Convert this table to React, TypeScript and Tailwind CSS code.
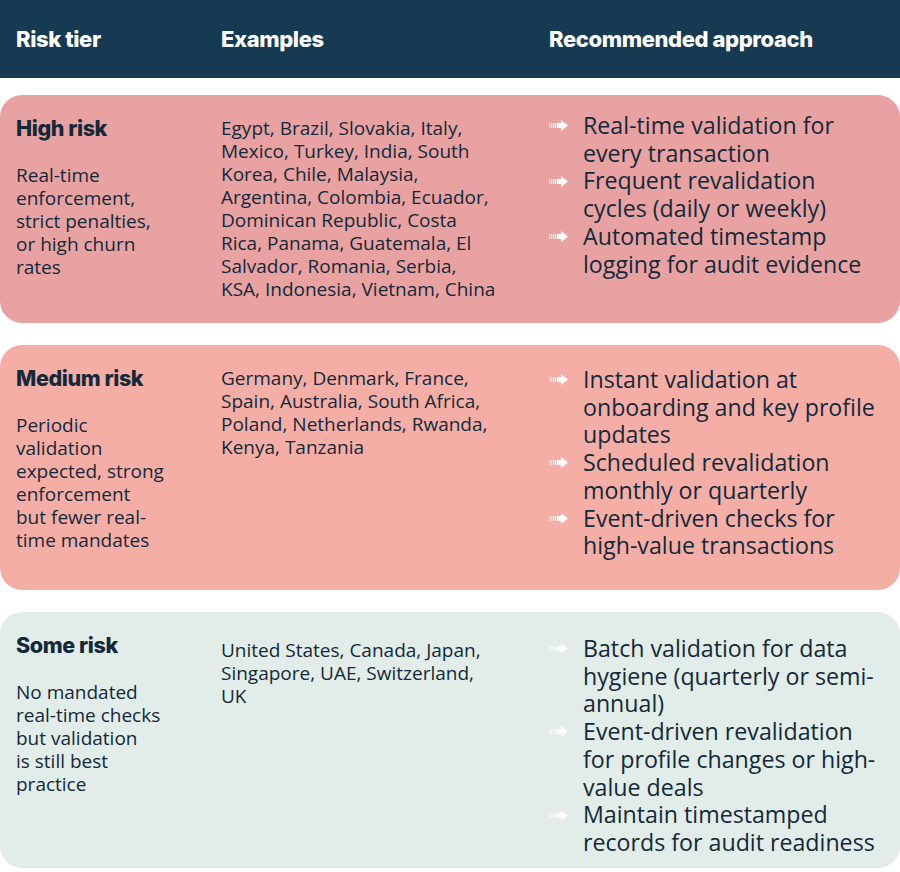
import type { ReactNode } from "react";

type Tier = {
  title: string;
  desc: string[];
  examples: string[];
  approach: string[][];
  bg: string;
  height: string;
  exTop: string;
  apTop: string;
};

const tiers: Tier[] = [
  {
    title: "High risk",
    desc: ["Real-time", "enforcement,", "strict penalties,", "or high churn", "rates"],
    examples: [
      "Egypt, Brazil, Slovakia, Italy,",
      "Mexico, Turkey, India, South",
      "Korea, Chile, Malaysia,",
      "Argentina, Colombia, Ecuador,",
      "Dominican Republic, Costa",
      "Rica, Panama, Guatemala, El",
      "Salvador, Romania, Serbia,",
      "KSA, Indonesia, Vietnam, China",
    ],
    approach: [
      ["Real-time validation for", "every transaction"],
      ["Frequent revalidation", "cycles (daily or weekly)"],
      ["Automated timestamp", "logging for audit evidence"],
    ],
    bg: "bg-[#e8a2a2]",
    height: "h-[228px]",
    exTop: "pt-[3px]",
    apTop: "-mt-[2px]",
  },
  {
    title: "Medium risk",
    desc: ["Periodic", "validation", "expected, strong", "enforcement", "but fewer real-", "time mandates"],
    examples: [
      "Germany, Denmark, France,",
      "Spain, Australia, South Africa,",
      "Poland, Netherlands, Rwanda,",
      "Kenya, Tanzania",
    ],
    approach: [
      ["Instant validation at", "onboarding and key profile", "updates"],
      ["Scheduled revalidation", "monthly or quarterly"],
      ["Event-driven checks for", "high-value transactions"],
    ],
    bg: "bg-[#f5aea6]",
    height: "h-[245px]",
    exTop: "pt-[3px]",
    apTop: "mt-[2px]",
  },
  {
    title: "Some risk",
    desc: ["No mandated", "real-time checks", "but validation", "is still best", "practice"],
    examples: ["United States, Canada, Japan,", "Singapore, UAE, Switzerland,", "UK"],
    approach: [
      ["Batch validation for data", "hygiene (quarterly or semi-", "annual)"],
      ["Event-driven revalidation", "for profile changes or high-", "value deals"],
      ["Maintain timestamped", "records for audit readiness"],
    ],
    bg: "bg-[#e2ece8]",
    height: "h-[256px]",
    exTop: "pt-[8px]",
    apTop: "mt-[4px]",
  },
];

function Arrow() {
  return (
    <svg width="19" height="11" viewBox="0 0 19 11" className="shrink-0">
      <rect x="0" y="3" width="1.2" height="5" fill="#fff" opacity="0.6" />
      <rect x="2" y="3" width="1.2" height="5" fill="#fff" opacity="0.75" />
      <rect x="4" y="3" width="1.2" height="5" fill="#fff" opacity="0.9" />
      <rect x="6" y="3" width="1.2" height="5" fill="#fff" />
      <rect x="8" y="3" width="4.5" height="5" fill="#fff" />
      <path d="M12 0 L19 5.5 L12 11 Z" fill="#fff" />
    </svg>
  );
}

function Lines({ lines }: { lines: string[] }): ReactNode {
  return lines.map((l, i) => (
    <div key={i} className="whitespace-nowrap">
      {l}
    </div>
  ));
}

export default function App() {
  return (
    <div className="w-[900px] h-[872px] bg-white text-[#13293a] font-['Open_Sans',sans-serif]">
      <div className="h-[78px] bg-[#173a53] flex items-center text-white font-['Inter',sans-serif] font-extrabold text-[22px] tracking-[-0.4px]">
        <div className="w-[221px] pl-4">Risk tier</div>
        <div className="w-[328px]">Examples</div>
        <div>Recommended approach</div>
      </div>

      <div className="flex flex-col gap-[22px] pt-[17px]">
        {tiers.map((t) => (
          <div key={t.title} className={`${t.bg} ${t.height} rounded-[22px] flex pt-[19px]`}>
            <div className="w-[221px] pl-4">
              <div className="font-['Inter',sans-serif] font-extrabold text-[21.5px] tracking-[-0.4px] leading-[28px] mb-[22px]">
                {t.title}
              </div>
              <div className="text-[19px] leading-[23px]">
                <Lines lines={t.desc} />
              </div>
            </div>
            <div className={`w-[328px] text-[19px] leading-[23px] ${t.exTop}`}>
              <Lines lines={t.examples} />
            </div>
            <div className={`flex flex-col text-[23.2px] leading-[27.7px] ${t.apTop}`}>
              {t.approach.map((a, i) => (
                <div key={i} className="flex">
                  <div className="w-[34px] h-[27.7px] flex items-center">
                    <Arrow />
                  </div>
                  <div>
                    <Lines lines={a} />
                  </div>
                </div>
              ))}
            </div>
          </div>
        ))}
      </div>
    </div>
  );
}
